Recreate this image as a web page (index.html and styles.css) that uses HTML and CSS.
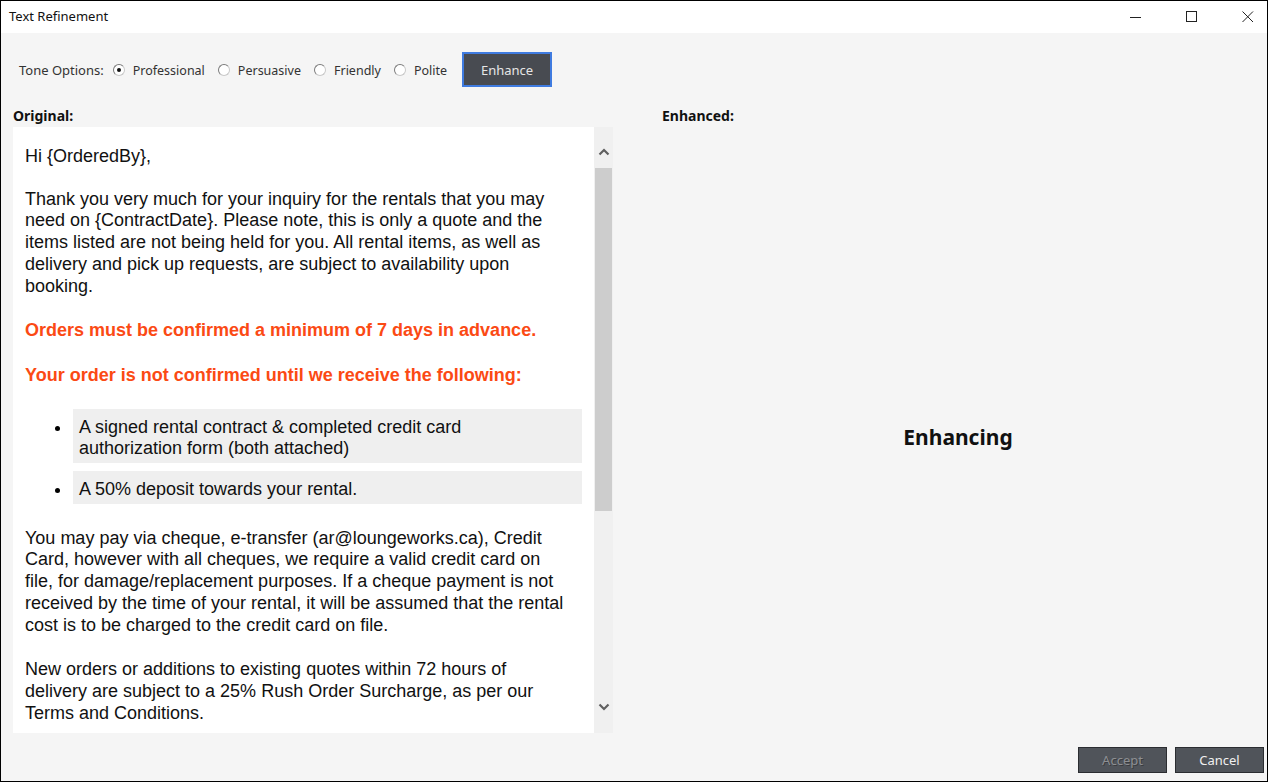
FILE: index.html
```html
<!DOCTYPE html>
<html>
<head>
<meta charset="utf-8">
<title>Text Refinement</title>
<link rel="stylesheet" href="styles.css">
</head>
<body>
<div class="window">
  <div class="titlebar">
    <span class="title">Text Refinement</span>
    <div class="controls">
      <span class="ctl"><svg width="12" height="12" viewBox="0 0 12 12"><path d="M0 6.5H11" stroke="#222" stroke-width="1"/></svg></span>
      <span class="ctl"><svg width="12" height="12" viewBox="0 0 12 12"><rect x="0.5" y="0.5" width="10" height="10" fill="none" stroke="#222" stroke-width="1"/></svg></span>
      <span class="ctl"><svg width="12" height="12" viewBox="0 0 12 12"><path d="M0.5 0.5L11 11M11 0.5L0.5 11" stroke="#222" stroke-width="1"/></svg></span>
    </div>
  </div>

  <div class="toolbar">
    <span class="tone-label">Tone Options:</span>
    <label class="radio"><span class="dot checked"></span>Professional</label>
    <label class="radio"><span class="dot"></span>Persuasive</label>
    <label class="radio"><span class="dot"></span>Friendly</label>
    <label class="radio"><span class="dot"></span>Polite</label>
    <button class="btn enhance">Enhance</button>
  </div>

  <div class="panes">
    <div class="pane left">
      <div class="pane-label orig">Original:</div>
      <div class="editor">
        <div class="doc">
          <p class="p-hi">Hi {OrderedBy},</p>
          <p class="p-body">Thank you very much for your inquiry for the rentals that you may need on {ContractDate}. Please note, this is only a quote and the items listed are not being held for you. All rental items, as well as delivery and pick up requests, are subject to availability upon booking.</p>
          <p class="p-warn">Orders must be confirmed a minimum of 7 days in advance.</p>
          <p class="p-warn second">Your order is not confirmed until we receive the following:</p>
          <ul class="reqs">
            <li>A signed rental contract &amp; completed credit card authorization form (both attached)</li>
            <li>A 50% deposit towards your rental.</li>
          </ul>
          <p class="p-body">You may pay via cheque, e-transfer (ar@loungeworks.ca), Credit Card, however with all cheques, we require a valid credit card on file, for damage/replacement purposes. If a cheque payment is not received by the time of your rental, it will be assumed that the rental cost is to be charged to the credit card on file.</p>
          <p class="p-body">New orders or additions to existing quotes within 72 hours of delivery are subject to a 25% Rush Order Surcharge, as per our Terms and Conditions.</p>
        </div>
        <div class="scrollbar">
          <span class="arrow up"><svg width="12" height="8" viewBox="0 0 12 8"><path d="M1.5 6.5L6 2L10.5 6.5" fill="none" stroke="#606060" stroke-width="2.2"/></svg></span>
          <div class="track"><div class="thumb"></div></div>
          <span class="arrow down"><svg width="12" height="8" viewBox="0 0 12 8"><path d="M1.5 1.5L6 6L10.5 1.5" fill="none" stroke="#606060" stroke-width="2.2"/></svg></span>
        </div>
      </div>
    </div>
    <div class="pane right">
      <div class="pane-label">Enhanced:</div>
      <div class="status">Enhancing</div>
    </div>
  </div>

  <div class="footer">
    <button class="btn small disabled">Accept</button>
    <button class="btn small">Cancel</button>
  </div>
</div>
</body>
</html>
```

FILE: styles.css
```css
* { box-sizing: border-box; }
html, body { margin: 0; padding: 0; }
body {
  width: 1268px;
  height: 782px;
  overflow: hidden;
  font-family: "Noto Sans", "Open Sans", sans-serif;
}
.window {
  width: 1268px;
  height: 782px;
  border: 1px solid #000;
  background: #f5f5f5;
  display: flex;
  flex-direction: column;
}
.titlebar {
  height: 32px;
  flex: none;
  background: #fff;
  display: flex;
  align-items: center;
  justify-content: space-between;
  padding-left: 8px;
}
.title {
  font-size: 13px;
  color: #111;
  margin-top: -2px;
}
.controls {
  display: flex;
  gap: 18px;
  height: 100%;
}
.ctl {
  width: 38px;
  display: flex;
  align-items: center;
  justify-content: center;
  margin-top: -1px;
}
.toolbar {
  height: 71px;
  flex: none;
  display: flex;
  align-items: flex-start;
  padding: 19px 0 0 18px;
  font-size: 13px;
  color: #333;
}
.tone-label, .radio {
  height: 34px;
  display: flex;
  align-items: center;
  padding-top: 2px;
}
.tone-label { margin-right: 9px; }
.radio { margin-right: 13px; font-size: 12.5px; }
.dot {
  width: 12px;
  height: 12px;
  border-radius: 50%;
  border: 1px solid #7a7a7a;
  border-right-color: #c8c8c8;
  border-bottom-color: #c8c8c8;
  background: #fff;
  margin-right: 8px;
  position: relative;
}
.dot.checked::after {
  content: "";
  position: absolute;
  left: 3px;
  top: 3px;
  width: 4px;
  height: 4px;
  border-radius: 50%;
  background: #111;
}
.btn {
  font-family: "Noto Sans", "Open Sans", sans-serif;
  font-size: 12px;
  color: #e6e6e6;
  background: #484b51;
  border: 1px solid #2b2d31;
  padding: 0;
  cursor: default;
}
.enhance {
  width: 90px;
  height: 35px;
  border: 2px solid #3f7be0;
  margin-left: 2px;
  font-size: 13px;
}
.panes {
  flex: none;
  height: 643px;
  display: grid;
  grid-template-columns: 648px 1fr;
}
.pane { display: flex; flex-direction: column; }
.pane.left { padding-left: 12px; }
.pane-label {
  height: 23px;
  font-size: 14px;
  font-weight: 700;
  color: #111;
  display: flex;
  align-items: center;
  padding-bottom: 1px;
}
.pane.right .pane-label { padding-left: 13px; }
.editor {
  width: 600px;
  height: 606px;
  display: flex;
  background: #fff;
}
.doc {
  flex: 1;
  overflow: hidden;
  padding: 19px 29px 0 12px;
  font-family: "Liberation Sans", Arial, sans-serif;
  font-size: 18px;
  line-height: 21.7px;
  color: #111;
}
.doc p { margin: 0 0 23px; }
.doc .p-hi { margin-bottom: 21px; }
.doc .p-warn {
  color: #fb4a14;
  font-weight: 700;
  margin-bottom: 23px;
}
.doc .p-warn.second { margin-bottom: 22px; }
.reqs {
  margin: 0 -17px 24px 0;
  padding: 0 0 0 48px;
  list-style: none;
}
.reqs li {
  position: relative;
  background: #efefef;
  padding: 8px 17px 3px 6px;
  margin-bottom: 8px;
}
.reqs li:last-child { margin-bottom: 0; }
.reqs li::before {
  content: "";
  position: absolute;
  left: -18px;
  top: 17px;
  width: 5px;
  height: 5px;
  border-radius: 50%;
  background: #000;
}
.scrollbar {
  width: 19px;
  flex: none;
  background: #f0f0f0;
  display: flex;
  flex-direction: column;
}
.arrow {
  height: 41px;
  display: flex;
  justify-content: center;
  align-items: flex-start;
}
.arrow.up { padding-top: 21px; }
.arrow.down { padding-top: 11px; }
.track { flex: 1; }
.thumb {
  height: 343px;
  margin: 0 1px;
  background: #cdcdcd;
}
.status {
  flex: 1;
  display: flex;
  align-items: center;
  justify-content: center;
  font-size: 21px;
  font-weight: 700;
  color: #111;
}
.footer {
  flex: 1;
  display: flex;
  justify-content: flex-end;
  align-items: flex-start;
  gap: 8px;
  padding: 0 3px 0 0;
}
.btn.small {
  width: 89px;
  height: 26px;
  color: #f0f0f0;
  background: #50545a;
  font-size: 13px;
}
.btn.disabled {
  color: #8d8f93;
  text-shadow: 1px 1px 0 #3a3c40;
}
```
